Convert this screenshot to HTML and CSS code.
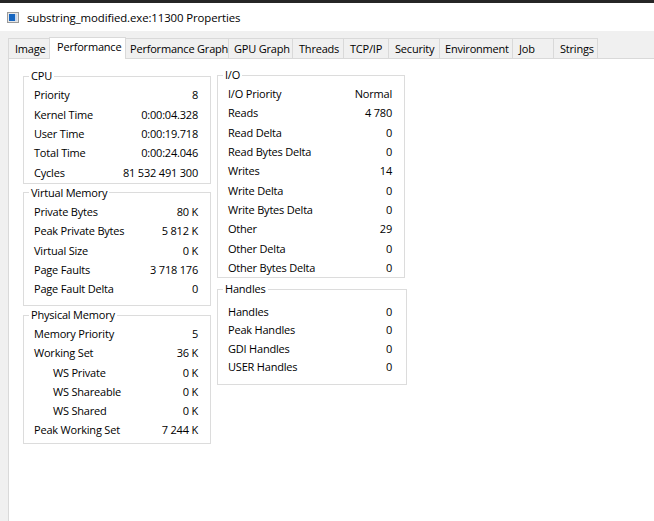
FILE: index.html
```html
<!DOCTYPE html>
<html>
<head>
<meta charset="utf-8">
<link rel="stylesheet" href="styles.css">
</head>
<body>
<div class="window">
  <div class="topline"></div>
  <div class="titlebar">
    <svg class="appicon" width="12" height="11" viewBox="0 0 12 11">
      <rect x="0.5" y="0.5" width="11" height="10" fill="#e6e6e6" stroke="#9a9a9a"/>
      <rect x="2" y="2" width="6" height="7" fill="#1565c0"/>
      <rect x="8" y="2" width="2" height="7" fill="#c9d7ea"/>
    </svg>
    <span class="title">substring_modified.exe:11300 Properties</span>
  </div>
  <div class="tabstrip">
    <div class="tabs">
      <div class="tab t-image">Image</div>
      <div class="tab t-perf selected">Performance</div>
      <div class="tab t-pgraph">Performance Graph</div>
      <div class="tab t-gpu">GPU Graph</div>
      <div class="tab t-threads">Threads</div>
      <div class="tab t-tcp">TCP/IP</div>
      <div class="tab t-sec">Security</div>
      <div class="tab t-env">Environment</div>
      <div class="tab t-job">Job</div>
      <div class="tab t-str">Strings</div>
    </div>
    <div class="panel">
      <div class="col col-left">
        <fieldset class="group g-cpu">
          <legend>CPU</legend>
          <div class="row"><span>Priority</span><span>8</span></div>
          <div class="row"><span>Kernel Time</span><span>0:00:04.328</span></div>
          <div class="row"><span>User Time</span><span>0:00:19.718</span></div>
          <div class="row"><span>Total Time</span><span>0:00:24.046</span></div>
          <div class="row"><span>Cycles</span><span>81 532 491 300</span></div>
        </fieldset>
        <fieldset class="group g-vm">
          <legend>Virtual Memory</legend>
          <div class="row"><span>Private Bytes</span><span>80 K</span></div>
          <div class="row"><span>Peak Private Bytes</span><span>5 812 K</span></div>
          <div class="row"><span>Virtual Size</span><span>0 K</span></div>
          <div class="row"><span>Page Faults</span><span>3 718 176</span></div>
          <div class="row"><span>Page Fault Delta</span><span>0</span></div>
        </fieldset>
        <fieldset class="group g-pm">
          <legend>Physical Memory</legend>
          <div class="row"><span>Memory Priority</span><span>5</span></div>
          <div class="row"><span>Working Set</span><span>36 K</span></div>
          <div class="row sub"><span>WS Private</span><span>0 K</span></div>
          <div class="row sub"><span>WS Shareable</span><span>0 K</span></div>
          <div class="row sub"><span>WS Shared</span><span>0 K</span></div>
          <div class="row"><span>Peak Working Set</span><span>7 244 K</span></div>
        </fieldset>
      </div>
      <div class="col col-right">
        <fieldset class="group g-io">
          <legend>I/O</legend>
          <div class="row"><span>I/O Priority</span><span>Normal</span></div>
          <div class="row"><span>Reads</span><span>4 780</span></div>
          <div class="row"><span>Read Delta</span><span>0</span></div>
          <div class="row"><span>Read Bytes Delta</span><span>0</span></div>
          <div class="row"><span>Writes</span><span>14</span></div>
          <div class="row"><span>Write Delta</span><span>0</span></div>
          <div class="row"><span>Write Bytes Delta</span><span>0</span></div>
          <div class="row"><span>Other</span><span>29</span></div>
          <div class="row"><span>Other Delta</span><span>0</span></div>
          <div class="row"><span>Other Bytes Delta</span><span>0</span></div>
        </fieldset>
        <fieldset class="group g-handles">
          <legend>Handles</legend>
          <div class="row"><span>Handles</span><span>0</span></div>
          <div class="row"><span>Peak Handles</span><span>0</span></div>
          <div class="row"><span>GDI Handles</span><span>0</span></div>
          <div class="row"><span>USER Handles</span><span>0</span></div>
        </fieldset>
      </div>
    </div>
  </div>
</div>
</body>
</html>
```

FILE: styles.css
```css
html, body {
  margin: 0;
  padding: 0;
}
body {
  width: 654px;
  height: 521px;
  overflow: hidden;
  background: #f0f0f0;
  font-family: "Open Sans", "Noto Sans", sans-serif;
  font-size: 11px;
  letter-spacing: -0.2px;
  color: #000;
}
.window {
  display: flex;
  flex-direction: column;
  height: 521px;
}
.topline {
  height: 3px;
  background: #262626;
  flex: none;
}
.titlebar {
  height: 28px;
  background: #fff;
  display: flex;
  align-items: center;
  padding-left: 7px;
  gap: 8px;
  flex: none;
}
.appicon {
  display: block;
}
.title {
  font-size: 11.4px;
  letter-spacing: -0.1px;
  color: #000;
}
.tabstrip {
  flex: 1;
  display: flex;
  flex-direction: column;
  padding-top: 6px;
  padding-left: 8px;
}
.tabs {
  display: flex;
  align-items: flex-end;
  height: 21px;
  flex: none;
}
.tab {
  box-sizing: border-box;
  height: 20px;
  border: 1px solid #d9d9d9;
  border-bottom: none;
  background: #f0f0f0;
  margin-left: -1px;
  padding-left: 6px;
  line-height: 19px;
  white-space: nowrap;
  overflow: hidden;
  flex: none;
}
.tab:first-child {
  margin-left: 0;
}
.tab.selected {
  height: 22px;
  margin-bottom: -1px;
  background: #fff;
  position: relative;
  z-index: 1;
  line-height: 17px;
  padding-left: 7px;
}
.t-image { width: 42px; }
.t-perf { width: 77px; }
.t-pgraph { width: 104px; padding-left: 4px; }
.t-gpu { width: 65px; padding-left: 5px; }
.t-threads { width: 52px; }
.t-tcp { width: 46px; }
.t-sec { width: 52px; }
.t-env { width: 74px; padding-left: 5px; }
.t-job { width: 42px; }
.t-str { width: 45px; padding-left: 6px; }

.panel {
  flex: 1;
  background: #fff;
  border-top: 1px solid #d9d9d9;
  border-left: 1px solid #d9d9d9;
  display: flex;
  gap: 6px;
  padding: 9px 0 0 14px;
}
.col {
  display: flex;
  flex-direction: column;
}
.col-left {
  width: 188px;
  gap: 1px;
}
.col-right {
  width: 188px;
  margin-top: -1px;
  gap: 3px;
}
.group {
  border: 1px solid #dcdcdc;
  margin: 0;
  padding: 0 12px 0 10px;
  min-width: 0;
}
.group legend {
  font-size: 11px;
  line-height: 16px;
  padding: 0 2px;
  margin-left: -5px;
}
.row {
  display: flex;
  justify-content: space-between;
  align-items: center;
  height: 19.4px;
  white-space: nowrap;
}
.row.sub {
  padding-left: 19px;
}
.g-cpu { padding-top: 1px; padding-bottom: 1px; }
.g-vm { padding-top: 1px; padding-bottom: 7px; }
.g-vm .row { height: 19.25px; }
.g-pm { padding-top: 1px; padding-bottom: 4px; }
.g-pm .row { height: 19.2px; }
.g-io { padding-top: 1px; padding-bottom: 0; }
.g-io .row { height: 19.33px; }
.g-handles { padding-top: 5px; padding-bottom: 9px; padding-right: 14px; width: 190px; box-sizing: border-box; }
.g-handles .row { height: 18.3px; }
```
